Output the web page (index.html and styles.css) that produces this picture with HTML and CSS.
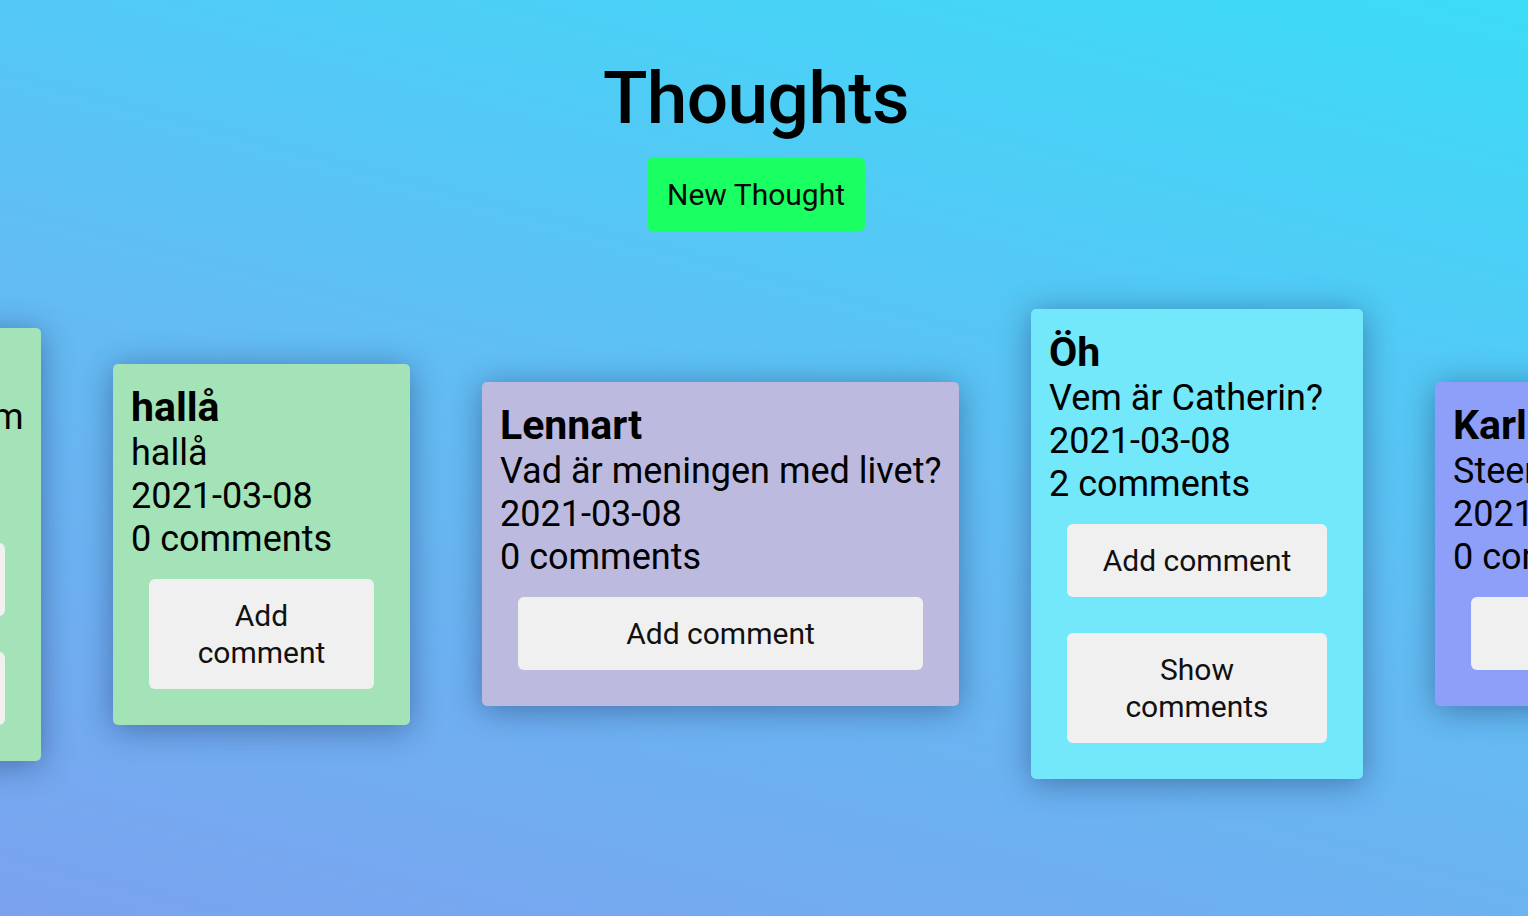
FILE: index.html
```html
<!DOCTYPE html>
<html lang="sv">
<head>
<meta charset="utf-8">
<title>Thoughts</title>
<link rel="stylesheet" href="styles.css">
</head>
<body>
<main class="page">
  <header class="header">
    <h1 class="title">Thoughts</h1>
    <button class="new-btn">New Thought</button>
  </header>
  <section class="row">
    <article class="card card-green card-w1">
      <h2 class="card-title">Resa</h2>
      <p class="card-line">Jag vill åka till Stockholm</p>
      <p class="card-line">2021-03-08</p>
      <p class="card-line">1 comments</p>
      <button class="card-btn">Add comment</button>
      <button class="card-btn">Show comments</button>
    </article>
    <article class="card card-green card-w2">
      <h2 class="card-title">hallå</h2>
      <p class="card-line">hallå</p>
      <p class="card-line">2021-03-08</p>
      <p class="card-line">0 comments</p>
      <button class="card-btn">Add comment</button>
    </article>
    <article class="card card-lavender card-w3">
      <h2 class="card-title">Lennart</h2>
      <p class="card-line">Vad är meningen med livet?</p>
      <p class="card-line">2021-03-08</p>
      <p class="card-line">0 comments</p>
      <button class="card-btn">Add comment</button>
    </article>
    <article class="card card-cyan card-w4">
      <h2 class="card-title">Öh</h2>
      <p class="card-line">Vem är Catherin?</p>
      <p class="card-line">2021-03-08</p>
      <p class="card-line">2 comments</p>
      <button class="card-btn">Add comment</button>
      <button class="card-btn">Show comments</button>
    </article>
    <article class="card card-periwinkle card-w5">
      <h2 class="card-title">Karl</h2>
      <p class="card-line">Steemar är en bra grej?</p>
      <p class="card-line">2021-03-08</p>
      <p class="card-line">0 comments</p>
      <button class="card-btn">Add comment</button>
    </article>
  </section>
</main>
</body>
</html>
```
FILE: styles.css
```css
* { box-sizing: border-box; }

html, body {
  margin: 0;
  padding: 0;
  width: 100%;
  height: 100%;
  overflow: hidden;
}

body {
  font-family: Roboto, "Noto Sans", sans-serif;
  color: #000;
  background: linear-gradient(15deg, #7ba2ef 0%, #62bdf3 50%, #3cdcf8 100%);
}

.page {
  width: 100%;
  height: 100%;
  display: flex;
  flex-direction: column;
}

.header {
  display: flex;
  flex-direction: column;
  align-items: center;
  padding-top: 56px;
  padding-right: 16px;
}

.title {
  margin: 0;
  font-size: 73px;
  line-height: 84px;
  font-weight: 500;
  letter-spacing: -0.6px;
}

.new-btn {
  margin-top: 18px;
  font-family: inherit;
  font-size: 30px;
  line-height: 35px;
  padding: 19px 20px;
  border: none;
  border-radius: 5px;
  background: #1aff62;
  color: #0a0a0a;
}

.row {
  display: flex;
  justify-content: center;
  align-items: center;
  gap: 72px;
  padding-top: 78px;
}

.card {
  flex: 0 0 auto;
  display: flex;
  flex-direction: column;
  padding: 18px;
  border-radius: 5px;
  box-shadow: 0 4px 32px rgba(20, 40, 90, 0.45);
}

.card-w1 { width: 441px; }
.card-w2 { width: 297px; }
.card-w3 { width: 477px; }
.card-w4 { width: 332px; }
.card-w5 { width: 493px; }

.card-green { background: #a3e3b7; }
.card-lavender { background: #bdbadf; }
.card-cyan { background: #72e8fa; }
.card-periwinkle { background: #8d9ff8; }

.card-title {
  margin: 0;
  font-size: 41px;
  line-height: 50px;
  font-weight: 700;
  white-space: nowrap;
}

.card-line {
  margin: 0;
  font-size: 36px;
  line-height: 43px;
  white-space: nowrap;
}

.card-btn {
  margin: 18px 18px 0;
  font-family: inherit;
  font-size: 30px;
  line-height: 37px;
  padding: 18px 24px;
  border: none;
  border-radius: 6px;
  background: #f0f0f0;
  color: #111;
  text-align: center;
}

.card-btn + .card-btn {
  margin-top: 36px;
}

.card-btn:last-child {
  margin-bottom: 18px;
}
```
